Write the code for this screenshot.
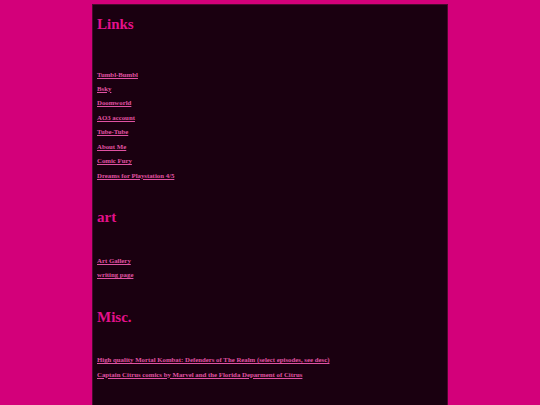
import React from 'react';

const sections = [
  {
    title: 'Links',
    top: '',
    gap: 'mt-[33.5px]',
    links: [
      'Tumbl-Bumbl',
      'Bsky',
      'Doomworld',
      'AO3 account',
      'Tube-Tube',
      'About Me',
      'Comic Fury',
      'Dreams for Playstation 4/5',
    ],
  },
  {
    title: 'art',
    top: 'mt-[24px]',
    gap: 'mt-[27px]',
    links: ['Art Gallery', 'writing page'],
  },
  {
    title: 'Misc.',
    top: 'mt-[24px]',
    gap: 'mt-[26.5px]',
    links: [
      'High quality Mortal Kombat: Defenders of The Realm (select episodes, see desc)',
      'Captain Citrus comics by Marvel and the Florida Deparment of Citrus',
    ],
  },
];

export default function App() {
  return (
    <div className="min-h-screen bg-[#d3007a] pt-[4px] font-['Liberation_Serif',serif]">
      <div className="mx-auto w-[356px] min-h-[420px] bg-[#1a0010] border border-[#4a0a2e] pl-[4px] pt-[9px]">
        {sections.map((s) => (
          <div key={s.title} className={s.top}>
            <h2 className="text-[15px] leading-[20px] font-bold text-[#e3118a]">{s.title}</h2>
            <ul className={s.gap}>
              {s.links.map((l) => (
                <li key={l} className="text-[6.8px] leading-[14.43px] font-bold">
                  <a href="#" className="text-[#e052a2] underline">
                    {l}
                  </a>
                </li>
              ))}
            </ul>
          </div>
        ))}
      </div>
    </div>
  );
}
